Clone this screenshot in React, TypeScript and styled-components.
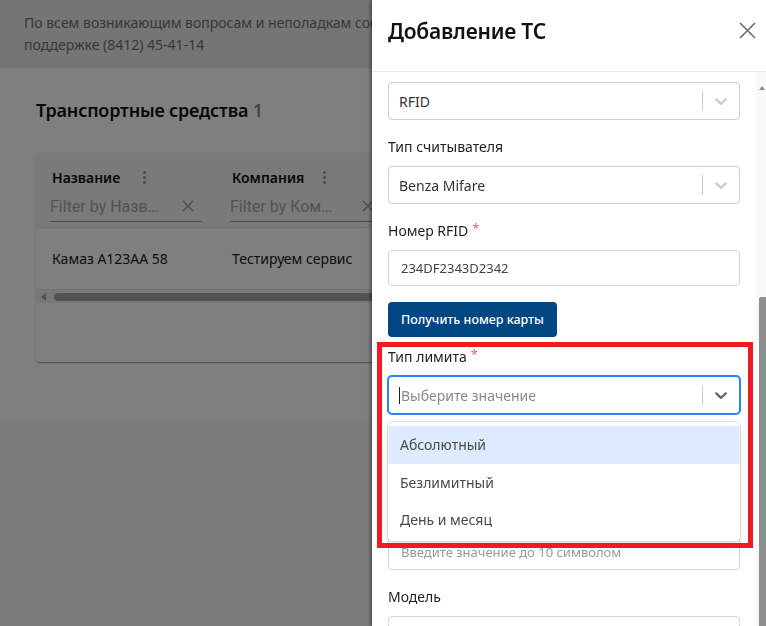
import React from 'react'
import styled, { createGlobalStyle } from 'styled-components'

const GlobalStyle = createGlobalStyle`
  html, body {
    margin: 0;
    padding: 0;
    height: 100%;
    overflow: hidden;
    background: #f8f8f8;
    font-family: "Noto Sans", "Open Sans", Arial, sans-serif;
  }
  * { box-sizing: border-box; }
`

const Page = styled.div`
  width: 100%;
  height: 626px;
  background: #f8f8f8;
`

const Notice = styled.div`
  background: #ebebeb;
  padding: 12px 24px;
  font-size: 14px;
  line-height: 22px;
  color: #6f6f6f;
  height: 68px;
  white-space: nowrap;
  overflow: hidden;
`

const Main = styled.main`
  background: #fff;
  padding: 30px 0 60px 36px;
  overflow: hidden;
`

const PageTitle = styled.h1`
  margin: 0 0 31px;
  font-size: 18px;
  line-height: 24px;
  font-weight: 600;
  color: #111;
  letter-spacing: -0.2px;

  span {
    color: #8a8a8a;
    font-weight: 600;
  }
`

const TableCard = styled.div`
  width: 760px;
  height: 209px;
  background: #fff;
  border-radius: 4px;
  box-shadow: 0 2px 1px -1px rgba(0, 0, 0, 0.2), 0 1px 1px 0 rgba(0, 0, 0, 0.14), 0 1px 3px 0 rgba(0, 0, 0, 0.12);
  overflow: hidden;
`

const HeadRow = styled.div`
  display: flex;
  background: #f4f4f4;
  height: 75px;
  border-bottom: 1px solid #e4e4e4;
`

const HeadCell = styled.div`
  width: 180px;
  padding: 13px 14px 0;
  display: flex;
  flex-direction: column;
`

const HeadTop = styled.div`
  display: flex;
  align-items: center;
  padding-left: 2px;
  height: 22px;
`

const HeadLabel = styled.div`
  width: 84px;
  font-size: 14px;
  font-weight: 600;
  color: #111;
`

const Kebab = styled.div`
  width: 16px;
  display: flex;
  flex-direction: column;
  align-items: center;
  gap: 2px;

  i {
    width: 3px;
    height: 3px;
    border-radius: 50%;
    background: #9a9a9a;
  }
`

const FilterRow = styled.div`
  margin-top: 3px;
  height: 31px;
  display: flex;
  align-items: center;
  border-bottom: 1px solid #949494;
  font-family: Roboto, Arial, sans-serif;
`

const FilterText = styled.div`
  width: 117px;
  flex: none;
  font-size: 16px;
  color: #a6a6a6;
  white-space: nowrap;
`

const FilterClear = styled.svg`
  width: 18px;
  height: 18px;
  margin-left: 12px;
  flex: none;
`

const BodyRow = styled.div`
  display: flex;
  height: 62px;
  align-items: center;
  border-bottom: 1px solid #e4e4e4;
`

const BodyCell = styled.div`
  width: 180px;
  padding-left: 16px;
  font-size: 14px;
  color: #1c1c1c;
  white-space: nowrap;
`

const HScroll = styled.div`
  height: 13px;
  background: #f1f1f1;
  display: flex;
  align-items: center;
  padding-left: 5px;
  gap: 8px;
`

const ArrowLeft = styled.div`
  width: 0;
  height: 0;
  border-top: 4px solid transparent;
  border-bottom: 4px solid transparent;
  border-right: 5px solid #a3a3a3;
`

const Thumb = styled.div`
  flex: 1;
  height: 8px;
  border-radius: 4px;
  background: #a3a3a3;
`

const Overlay = styled.div`
  position: fixed;
  inset: 0;
  background: rgba(0, 0, 0, 0.5);
`

const Drawer = styled.aside`
  position: fixed;
  top: 0;
  right: 0;
  width: 394px;
  height: 100%;
  background: #fff;
  display: flex;
  flex-direction: column;
  box-shadow: -2px 0 3px rgba(0, 0, 0, 0.35);
`

const DrawerHeader = styled.div`
  height: 72px;
  flex: none;
  display: flex;
  align-items: flex-start;
  justify-content: space-between;
  padding: 16px 10px 0 16px;
  border-bottom: 1px solid #ececec;
`

const DrawerTitle = styled.h2`
  margin: 0;
  font-size: 21px;
  line-height: 30px;
  font-weight: 600;
  color: #111;
  letter-spacing: -0.2px;
`

const CloseIcon = styled.svg`
  width: 17px;
  height: 17px;
  margin-top: 6px;
`

const DrawerBody = styled.div`
  flex: 1;
  display: flex;
  min-height: 0;
`

const Form = styled.div`
  flex: 1;
  padding: 10px 16px 0;
  overflow: hidden;
`

const Track = styled.div`
  width: 10px;
  flex: none;
  background: #f9f9f9;
  display: flex;
  flex-direction: column;
  align-items: flex-end;
  padding-top: 14px;
`

const TrackArrow = styled.div`
  width: 0;
  height: 0;
  margin-right: 1px;
  border-left: 3px solid transparent;
  border-right: 3px solid transparent;
  border-bottom: 4px solid #8c8c8c;
`

const TrackThumb = styled.div`
  margin-top: 207px;
  width: 7px;
  flex: 1;
  background: #8e8e8e;
  border-radius: 2px 0 0 0;
`

const Field = styled.div<{ $gap?: number }>`
  margin-top: ${(p) => (p.$gap ?? 17)}px;
  position: relative;
`

const Label = styled.div`
  font-size: 14px;
  line-height: 20px;
  height: 20px;
  color: #1f1f1f;
  margin-bottom: 9px;

  b {
    position: relative;
    top: -3px;
    color: #f06060;
    font-weight: 400;
    margin-left: 4px;
    font-size: 13px;
  }
`

const SelectBox = styled.div<{ $focused?: boolean }>`
  height: 38px;
  display: flex;
  align-items: center;
  border: 1px solid ${(p) => (p.$focused ? '#2684ff' : '#cccccc')};
  box-shadow: ${(p) => (p.$focused ? '0 0 0 1px #2684ff' : 'none')};
  border-radius: 4px;
  background: #fff;
`

const SelectValue = styled.div<{ $placeholder?: boolean }>`
  flex: 1;
  padding-left: 10px;
  font-size: 14px;
  color: ${(p) => (p.$placeholder ? '#8a8a8a' : '#333')};
  display: flex;
  align-items: center;
`

const Caret = styled.span`
  width: 1px;
  height: 17px;
  background: #222;
  margin-right: 1px;
`

const Separator = styled.span`
  width: 1px;
  align-self: stretch;
  margin: 8px 0;
  background: #cccccc;
`

const Chevron = styled.svg<{ $dark?: boolean }>`
  width: 20px;
  height: 20px;
  margin: 0 8px;
  fill: ${(p) => (p.$dark ? '#666' : '#cccccc')};
`

const TextInput = styled.div<{ $placeholder?: boolean }>`
  height: 36px;
  display: flex;
  align-items: center;
  border: 1px solid #d6d6d6;
  border-radius: 4px;
  padding-left: 12px;
  font-size: 13px;
  color: ${(p) => (p.$placeholder ? '#9a9a9a' : '#444')};
`

const PrimaryButton = styled.button`
  margin-top: 16px;
  height: 35px;
  padding: 0 13px;
  border: none;
  border-radius: 4px;
  background: #004680;
  color: #fff;
  font-family: inherit;
  font-size: 12.5px;
  font-weight: 500;
`

const Menu = styled.div`
  position: absolute;
  left: 0;
  right: 0;
  top: calc(100% + 8px);
  background: #fff;
  border-radius: 4px;
  padding: 4px 0 2px;
  box-shadow: 0 0 0 1px rgba(0, 0, 0, 0.1), 0 4px 11px rgba(0, 0, 0, 0.1);
  z-index: 2;
`

const Option = styled.div<{ $active?: boolean }>`
  padding: 0 12px;
  height: 37.5px;
  display: flex;
  align-items: center;
  font-size: 14px;
  color: #4a4a4a;
  background: ${(p) => (p.$active ? '#deebff' : 'transparent')};
`

const Highlight = styled.div`
  position: absolute;
  left: 5px;
  top: 342px;
  width: 376px;
  height: 206px;
  border: 5px solid #ed1c24;
  pointer-events: none;
  z-index: 3;
`

const ChevronIcon = ({ dark }: { dark?: boolean }) => (
  <Chevron $dark={dark} viewBox="0 0 20 20">
    <path d="M4.516 7.548c0.436-0.446 1.043-0.481 1.576 0l3.908 3.747 3.908-3.747c0.533-0.481 1.141-0.446 1.574 0 0.436 0.445 0.408 1.197 0 1.615-0.406 0.418-4.695 4.502-4.695 4.502-0.217 0.223-0.502 0.335-0.787 0.335s-0.57-0.112-0.789-0.335c0 0-4.287-4.084-4.695-4.502s-0.436-1.17 0-1.615z" />
  </Chevron>
)

const Select = ({ value, placeholder, focused }: { value?: string; placeholder?: string; focused?: boolean }) => (
  <SelectBox $focused={focused}>
    <SelectValue $placeholder={!value}>
      {focused && <Caret />}
      {value || placeholder}
    </SelectValue>
    <Separator />
    <ChevronIcon dark={focused} />
  </SelectBox>
)

// подписи фильтров уже обрезаны, как в таблице
const columns = [
  { title: 'Название', filter: 'Filter by Назв…', value: 'Камаз А123АА 58' },
  { title: 'Компания', filter: 'Filter by Ком…', value: 'Тестируем сервис' },
]

const App: React.FC = () => {
  return (
    <>
      <GlobalStyle />
      <Page>
        <Notice>
          По всем возникающим вопросам и неполадкам сообщайте
          <br />
          поддержке (8412) 45-41-14
        </Notice>
        <Main>
          <PageTitle>
            Транспортные средства <span>1</span>
          </PageTitle>
          <TableCard>
            <HeadRow>
              {columns.map((c) => (
                <HeadCell key={c.title}>
                  <HeadTop>
                    <HeadLabel>{c.title}</HeadLabel>
                    <Kebab>
                      <i />
                      <i />
                      <i />
                    </Kebab>
                  </HeadTop>
                  <FilterRow>
                    <FilterText>{c.filter}</FilterText>
                    <FilterClear viewBox="0 0 24 24">
                      <path d="M5 5 L19 19 M19 5 L5 19" stroke="#a0a0a0" strokeWidth="2.2" fill="none" />
                    </FilterClear>
                  </FilterRow>
                </HeadCell>
              ))}
            </HeadRow>
            <BodyRow>
              {columns.map((c) => (
                <BodyCell key={c.title}>{c.value}</BodyCell>
              ))}
            </BodyRow>
            <HScroll>
              <ArrowLeft />
              <Thumb />
            </HScroll>
          </TableCard>
        </Main>
      </Page>
      <Overlay />
      <Drawer>
        <DrawerHeader>
          <DrawerTitle>Добавление ТС</DrawerTitle>
          <CloseIcon viewBox="0 0 17 17">
            <path d="M1 1 L16 16 M16 1 L1 16" stroke="#6e6e6e" strokeWidth="1.6" fill="none" />
          </CloseIcon>
        </DrawerHeader>
        <DrawerBody>
          <Form>
            <Field $gap={0}>
              <Select value="RFID" />
            </Field>
            <Field>
              <Label>Тип считывателя</Label>
              <Select value="Benza Mifare" />
            </Field>
            <Field>
              <Label>
                Номер RFID<b>*</b>
              </Label>
              <TextInput>234DF2343D2342</TextInput>
            </Field>
            <PrimaryButton>Получить номер карты</PrimaryButton>
            <Field $gap={10}>
              <Label>
                Тип лимита<b>*</b>
              </Label>
              <Select placeholder="Выберите значение" focused />
              <Menu>
                <Option $active>Абсолютный</Option>
                <Option>Безлимитный</Option>
                <Option>День и месяц</Option>
              </Menu>
            </Field>
            <Field $gap={120}>
              <TextInput $placeholder>Введите значение до 10 символом</TextInput>
            </Field>
            <Field>
              <Label>Модель</Label>
              <TextInput $placeholder />
            </Field>
          </Form>
          <Track>
            <TrackArrow />
            <TrackThumb />
          </Track>
        </DrawerBody>
        <Highlight />
      </Drawer>
    </>
  )
}

export default App
